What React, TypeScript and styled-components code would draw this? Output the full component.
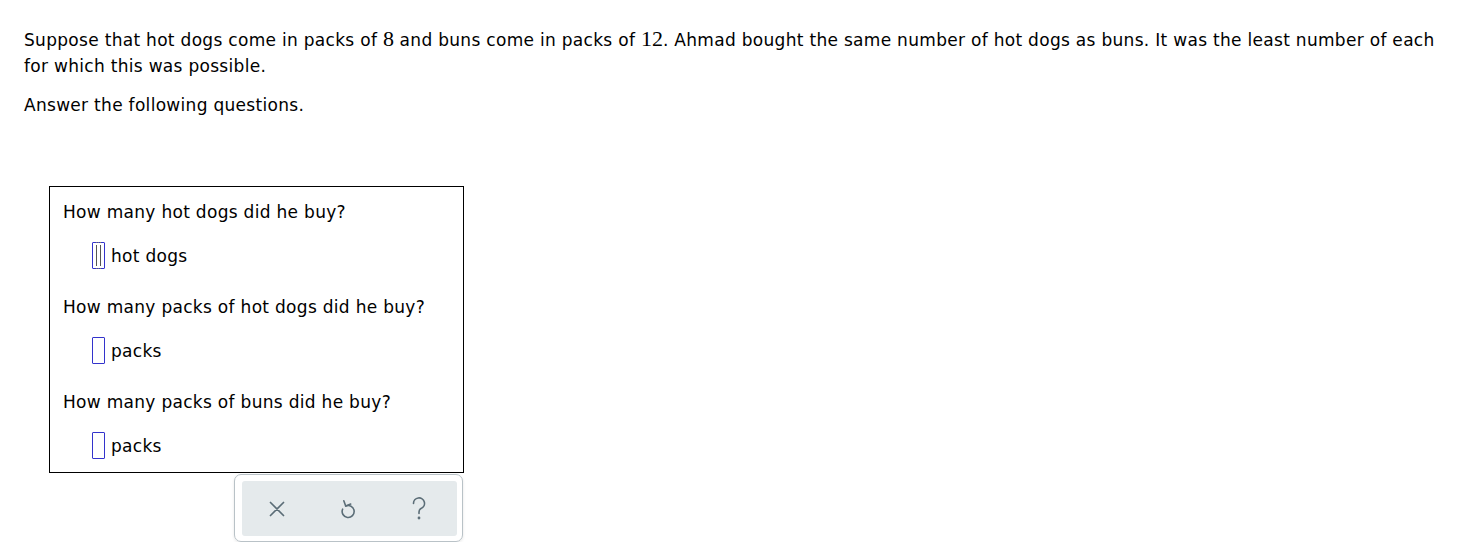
import React from 'react';
import styled, { createGlobalStyle } from 'styled-components';

const GlobalStyle = createGlobalStyle`
  body {
    margin: 0;
    background: #fff;
    font-family: Verdana, "DejaVu Sans", sans-serif;
    color: #000;
  }
`;

// style  ---------------------------------------------------
const Page = styled.div`
  padding: 27px 16px 0 24px;
`;

const TextStyle = `
  font-size: 17px;
  letter-spacing: 0.3px;
  line-height: 26px;
`;

const Paragraph = styled.p<{ gap?: number }>`
  margin: 0 0 ${({ gap }) => gap ?? 0}px 0;
  ${TextStyle}
`;

const MathNum = styled.span`
  font-family: "Liberation Serif", "DejaVu Serif", serif;
  font-size: 22px;
  line-height: 1;
  letter-spacing: 0;
`;

const Panel = styled.div`
  margin: 68px 0 0 25px;
  width: 415px;
  box-sizing: border-box;
  border: 1px solid #000;
  padding: 12px 0 13px 13px;
`;

const Question = styled.div`
  ${TextStyle}
`;

const AnswerRow = styled.div`
  display: flex;
  align-items: center;
  gap: 6px;
  margin: 17px 0 25px 29px;
  ${TextStyle}
  &:last-child {
    margin-bottom: 0;
  }
`;

const InputBox = styled.span`
  position: relative;
  display: inline-block;
  width: 13px;
  height: 27px;
  border: 1px solid #3333cc;
  border-radius: 1px;
  box-sizing: border-box;
`;

const Caret = styled.span`
  position: absolute;
  left: 3px;
  top: 2px;
  width: 3px;
  height: 21px;
  border-left: 1px solid #555;
  border-right: 1px solid #555;
  &::before,
  &::after {
    content: '';
    position: absolute;
    left: -1px;
    width: 5px;
    border-top: 1px dotted #777;
  }
  &::before {
    top: -3px;
  }
  &::after {
    bottom: -3px;
  }
`;

const ToolbarWrap = styled.div`
  margin: 1px 0 0 210px;
  width: 229px;
  height: 68px;
  box-sizing: border-box;
  border: 1px solid #b9c2c7;
  border-radius: 7px;
  padding: 6px 5px 5px 7px;
  box-shadow: 0 1px 3px rgba(0, 0, 0, 0.1);
`;

const Toolbar = styled.div`
  display: flex;
  align-items: center;
  gap: 41px;
  height: 100%;
  background: #e5eaec;
  border-radius: 3px;
  padding: 0 0 0 20px;
`;

const ToolButton = styled.button`
  display: flex;
  align-items: center;
  justify-content: center;
  background: none;
  border: none;
  padding: 0;
  width: 30px;
  height: 30px;
  color: #5b6d77;
  cursor: pointer;
`;

// Element  -------------------------------------------------
function AnswerInput({ unit, focused }: { unit: string; focused?: boolean }) {
  return (
    <AnswerRow>
      <InputBox>{focused && <Caret />}</InputBox>
      <span>{unit}</span>
    </AnswerRow>
  );
}

export default function App() {
  return (
    <>
      <GlobalStyle />
      <Page>
        <Paragraph gap={13}>
          Suppose that hot dogs come in packs of <MathNum>8</MathNum> and buns come in packs of{' '}
          <MathNum>12</MathNum>. Ahmad bought the same number of hot dogs as buns. It was the least
          number of each for which this was possible.
        </Paragraph>
        <Paragraph>Answer the following questions.</Paragraph>
        <Panel>
          <Question>How many hot dogs did he buy?</Question>
          <AnswerInput unit="hot dogs" focused />
          <Question>How many packs of hot dogs did he buy?</Question>
          <AnswerInput unit="packs" />
          <Question>How many packs of buns did he buy?</Question>
          <AnswerInput unit="packs" />
        </Panel>
        <ToolbarWrap>
          <Toolbar>
            <ToolButton aria-label="clear">
              <svg width="18" height="18" viewBox="0 0 18 18" fill="none" stroke="currentColor" strokeWidth="1.7" strokeLinecap="round">
                <path d="M2.5 2.5L15.5 15.5M15.5 2.5L2.5 15.5" />
              </svg>
            </ToolButton>
            <ToolButton aria-label="undo">
              <svg width="20" height="22" viewBox="0 0 20 22" fill="none" stroke="currentColor" strokeWidth="1.6" strokeLinecap="round" strokeLinejoin="round">
                <path d="M7.7 8 A6 6 0 1 1 4.6 11.2" />
                <path d="M5.8 2.8 L7.7 8 L12.7 6" />
              </svg>
            </ToolButton>
            <ToolButton aria-label="help">
              <svg width="18" height="26" viewBox="0 0 18 26" fill="none" stroke="currentColor" strokeWidth="1.6" strokeLinecap="round">
                <path d="M3.5 7.5 A5.5 5.5 0 1 1 11 12.5 C9.5 13.3 9 14.3 9 16 V17.5" />
                <circle cx="9" cy="22" r="0.6" fill="currentColor" />
              </svg>
            </ToolButton>
          </Toolbar>
        </ToolbarWrap>
      </Page>
    </>
  );
}
